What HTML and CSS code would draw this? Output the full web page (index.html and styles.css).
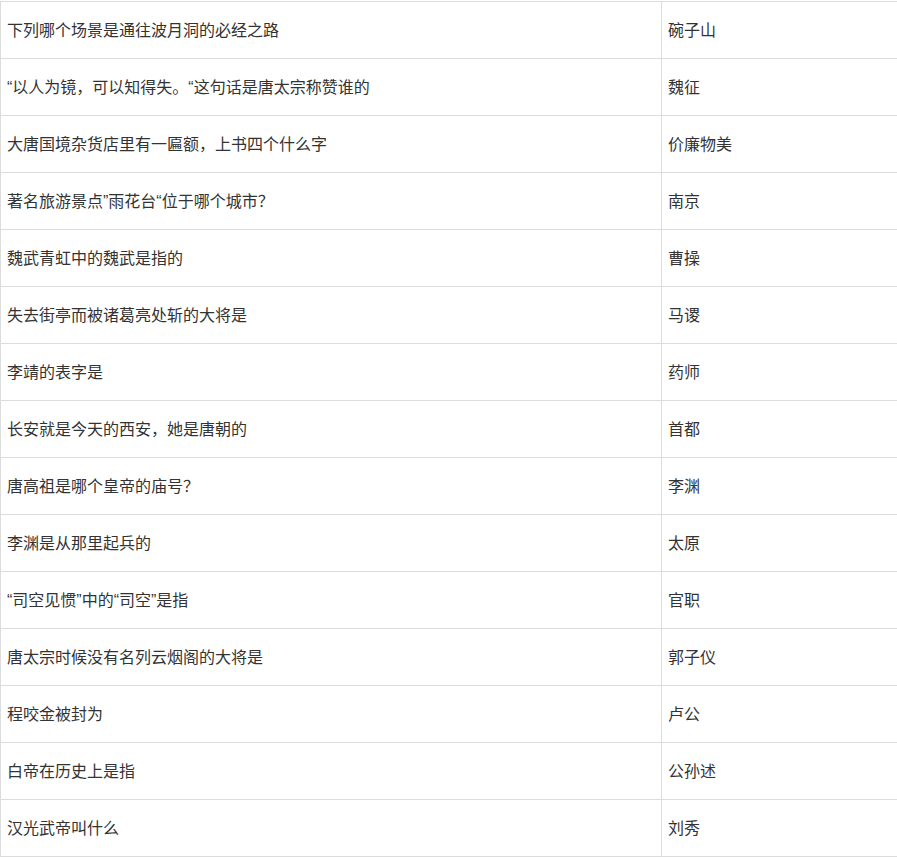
FILE: index.html
```html
<!DOCTYPE html>
<html lang="zh-CN">
<head>
<meta charset="utf-8">
<title>问答</title>
<link rel="stylesheet" href="styles.css">
</head>
<body>
<table class="qa">
<tbody>
<tr><td class="q">下列哪个场景是通往波月洞的必经之路</td><td class="a">碗子山</td></tr>
<tr><td class="q">“以人为镜，可以知得失。“这句话是唐太宗称赞谁的</td><td class="a">魏征</td></tr>
<tr><td class="q">大唐国境杂货店里有一匾额，上书四个什么字</td><td class="a">价廉物美</td></tr>
<tr><td class="q">著名旅游景点”雨花台“位于哪个城市？</td><td class="a">南京</td></tr>
<tr><td class="q">魏武青虹中的魏武是指的</td><td class="a">曹操</td></tr>
<tr><td class="q">失去街亭而被诸葛亮处斩的大将是</td><td class="a">马谡</td></tr>
<tr><td class="q">李靖的表字是</td><td class="a">药师</td></tr>
<tr><td class="q">长安就是今天的西安，她是唐朝的</td><td class="a">首都</td></tr>
<tr><td class="q">唐高祖是哪个皇帝的庙号？</td><td class="a">李渊</td></tr>
<tr><td class="q">李渊是从那里起兵的</td><td class="a">太原</td></tr>
<tr><td class="q">“司空见惯”中的“司空”是指</td><td class="a">官职</td></tr>
<tr><td class="q">唐太宗时候没有名列云烟阁的大将是</td><td class="a">郭子仪</td></tr>
<tr><td class="q">程咬金被封为</td><td class="a">卢公</td></tr>
<tr><td class="q">白帝在历史上是指</td><td class="a">公孙述</td></tr>
<tr><td class="q">汉光武帝叫什么</td><td class="a">刘秀</td></tr>
</tbody>
</table>
</body>
</html>
```

FILE: styles.css
```css
html, body {
  margin: 0;
  padding: 0;
  background: #fff;
}
body {
  padding-top: 1px;
  font-family: "Liberation Sans", "Noto Sans CJK SC", sans-serif;
  font-size: 16px;
  color: #333;
  text-spacing-trim: space-all;
}
.qa {
  border-collapse: collapse;
  width: 897px;
  table-layout: fixed;
}
.qa td {
  border: 1px solid #dcdcdc;
  height: 56px;
  padding: 2px 0 0 6px;
  box-sizing: border-box;
  vertical-align: middle;
  line-height: 20px;
  white-space: nowrap;
}
.qa td.q {
  width: 661px;
}
.qa td.a {
  width: 236px;
}
.qa tr {
  height: 57px;
}
```
